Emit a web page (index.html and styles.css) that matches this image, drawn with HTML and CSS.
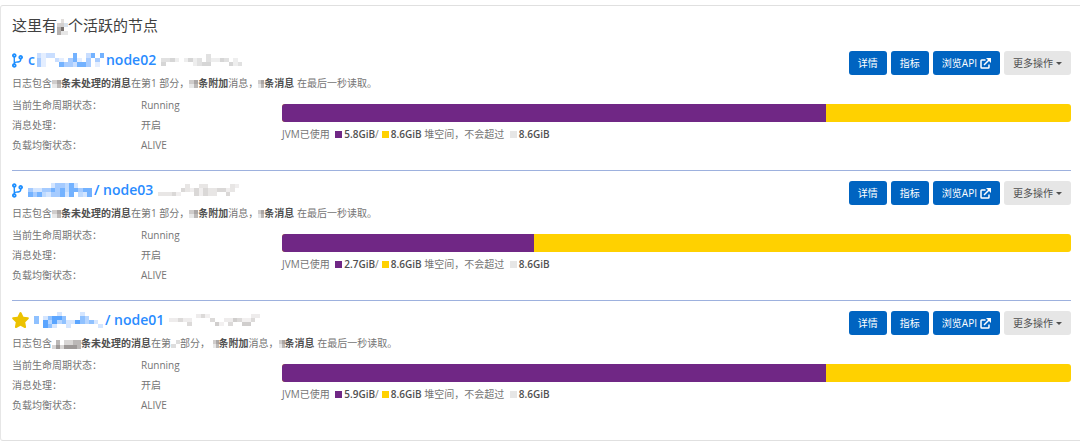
FILE: index.html
```html
<!DOCTYPE html>
<html lang="zh-CN">
<head>
<meta charset="utf-8">
<meta name="viewport" content="width=device-width, initial-scale=1">
<title>节点</title>
<link rel="stylesheet" href="styles.css">
</head>
<body>
<svg class="sprite" aria-hidden="true">
  <symbol id="branch" viewBox="0 0 384 512"><path d="M384 144c0-44.2-35.8-80-80-80s-80 35.8-80 80c0 36.4 24.3 67.1 57.5 76.8-.6 16.1-4.2 28.5-11 36.9-15.4 19.2-49.3 22.4-85.2 25.7-28.2 2.6-57.4 5.4-81.3 16.9v-144c32.5-10.2 56-40.5 56-76.3 0-44.2-35.8-80-80-80S0 35.8 0 80c0 35.8 23.5 66.1 56 76.3v199.3C23.5 365.9 0 396.2 0 432c0 44.2 35.8 80 80 80s80-35.8 80-80c0-34-21.2-63.1-51.2-74.6 3.1-5.2 7.8-9.8 14.9-13.4 16.2-8.2 40.4-10.4 66.1-12.8 42.2-3.9 90-8.4 118.2-43.4 14-17.4 21.1-39.8 21.6-67.9 31.6-10.8 54.4-40.7 54.4-75.9zM80 64c8.800 0 16 7.200 16 16s-7.200 16-16 16-16-7.200-16-16 7.200-16 16-16zm0 384c-8.800 0-16-7.200-16-16s7.200-16 16-16 16 7.200 16 16-7.200 16-16 16zm224-320c8.800 0 16 7.200 16 16s-7.200 16-16 16-16-7.200-16-16 7.200-16 16-16z"/></symbol>
  <symbol id="star" viewBox="20 0 536 512"><path d="M259.300 17.800L194 150.200 47.900 171.500c-26.200 3.800-36.700 36.100-17.700 54.600l105.700 103-25 145.500c-4.500 26.300 23.200 46 46.400 33.700L288 439.600l130.700 68.700c23.200 12.200 50.900-7.400 46.400-33.700l-25-145.500 105.700-103c19-18.500 8.500-50.800-17.700-54.600L382 150.200 316.700 17.800c-11.700-23.600-45.600-23.900-57.400 0z"/></symbol>
  <symbol id="external" viewBox="0 0 22 22"><path d="M11 4H3.500Q2 4 2 5.500V18.500Q2 20 3.500 20H16.500Q18 20 18 18.500V13M8 14L18 4" fill="none" stroke="currentColor" stroke-width="3"/><path d="M12 0h10v10z" fill="currentColor"/></symbol>
  <symbol id="dots" viewBox="0 0 2 2" preserveAspectRatio="none"><path fill="#cfcccb" d="M0 0h1v1H0z"/><path fill="#e8e8e8" d="M0 1h1v1H0z"/><path fill="#aaa6a5" d="M1 0h1v1H1z"/><path fill="#bbb8b7" d="M1 1h1v1H1z"/></symbol>
</svg>

<main class="card">
  <h1 class="heading">这里有<svg class="mask mask-heading" viewBox="0 0 3 4" preserveAspectRatio="none" aria-hidden="true"><path fill="#e2dfdd" d="M1 0h1v1H1z"/><path fill="#d3d0cf" d="M0 1h2v1H0z"/><path fill="#d9e2ec" d="M2 1h1v1H2z"/><path fill="#b4b0ae" d="M0 2h1v2H0z"/><path fill="#77716f" d="M1 2h1v1H1z"/><path fill="#e6e6e6" d="M1 3h2v1H1z"/></svg>个活跃的节点</h1>

  <section class="node">
    <header class="node-head">
      <div>
        <h2 class="title">
          <svg class="branch" aria-hidden="true"><use href="#branch"/></svg>
          <a class="name" href="#node02">c<svg class="mask mask-name" viewBox="0 0 15 3" preserveAspectRatio="none" aria-hidden="true"><path fill="#c9deff" d="M0 0h1v1H0zM2 0h2v1H2zM11 0h1v1h-1zM4 1h1v1H4zM8 2h1v1H8z"/><path fill="#e4eeff" d="M1 0h1v3H1zM5 1h1v1H5zM9 1h1v1H9zM13 2h1v1h-1z"/><path fill="#a8ccff" d="M0 1h1v2H0zM6 2h1v1H6zM7 1h1v2H7zM11 1h1v2h-1zM13 1h1v1h-1z"/><path fill="#73b2ff" d="M5 2h1v1H5zM8 0h1v2H8zM9 2h2v1H9zM12 0h1v1h-1zM14 0h1v1h-1z"/></svg>node02</a>
          <svg class="mask mask-host" viewBox="0 0 18 3" preserveAspectRatio="none" aria-hidden="true"><path fill="#e1e1e1" d="M0 1h2v1H0zM8 1h1v2H8zM10 0h1v2h-1zM14 1h1v1h-1zM17 2h1v1h-1z"/><path fill="#d6d6d6" d="M0 2h1v1H0zM2 1h1v1H2zM6 1h1v1H6zM9 2h2v1H9zM13 1h1v1h-1zM15 2h1v1h-1z"/><path fill="#eee" d="M3 1h1v1H3zM5 1h1v1H5zM7 1h1v2H7zM11 1h2v1h-2zM16 1h1v2h-1z"/></svg>
        </h2>
        <p class="message">日志包含<svg class="mask dots" aria-hidden="true"><use href="#dots"/></svg><b>条未处理的消息</b>在第1 部分，<svg class="mask dots" aria-hidden="true"><use href="#dots"/></svg><b>条附加</b>消息，<svg class="mask dots-small" aria-hidden="true"><use href="#dots"/></svg><b>条消息</b> 在最后一秒读取。</p>
      </div>
      <div class="actions">
        <button class="btn" type="button">详情</button>
        <button class="btn" type="button">指标</button>
        <a class="btn" href="#api02">浏览API <svg class="external" aria-hidden="true"><use href="#external"/></svg></a>
        <button class="btn btn-more" type="button">更多操作<span class="caret"></span></button>
      </div>
    </header>
    <div class="details">
      <dl class="status">
        <dt>当前生命周期状态：</dt><dd>Running</dd>
        <dt>消息处理：</dt><dd>开启</dd>
        <dt>负载均衡状态：</dt><dd>ALIVE</dd>
      </dl>
      <div class="memory">
        <div class="bar"><div class="used" style="width:69%"></div></div>
        <p class="legend">JVM已使用 <i class="key key-used"></i><b>5.8GiB</b>/<i class="key key-heap"></i><b>8.6GiB</b> 堆空间，不会超过 <i class="key key-max"></i><b>8.6GiB</b></p>
      </div>
    </div>
  </section>

  <section class="node">
    <header class="node-head">
      <div>
        <h2 class="title">
          <svg class="branch" aria-hidden="true"><use href="#branch"/></svg>
          <a class="name" href="#node03"><svg class="mask mask-name-short" viewBox="0 0 14 3" preserveAspectRatio="none" aria-hidden="true"><path fill="#d3e5ff" d="M1 1h2v1H1zM5 0h1v1H5zM10 0h1v1h-1zM4 2h1v1H4zM8 2h1v1H8zM12 2h1v1h-1z"/><path fill="#a5cbff" d="M0 1h1v1H0zM3 1h2v1H3zM6 0h2v1H6zM6 1h1v1H6zM11 1h1v1h-1zM1 2h1v1H1zM5 2h2v1H5z"/><path fill="#73b2ff" d="M0 2h1v1H0zM2 2h1v1H2zM5 1h1v1H5zM7 1h1v1H7zM9 0h1v3H9zM10 1h1v1h-1zM12 1h2v1h-2zM13 2h1v1h-1zM7 2h1v1H7z"/><path fill="#bedaff" d="M3 2h1v1H3zM8 0h1v2H8zM11 2h1v1h-1z"/></svg>/ node03</a>
          <svg class="mask mask-host" viewBox="0 0 18 3" preserveAspectRatio="none" aria-hidden="true"><path fill="#e8e6e5" d="M0 2h3v1H0zM6 0h1v2H6zM9 0h2v1H9zM11 1h2v2h-2zM16 0h1v2h-1z"/><path fill="#dad8d7" d="M3 2h1v1H3zM5 1h1v1H5zM8 1h1v2H8zM10 1h1v2h-1zM13 1h2v1h-2zM15 2h1v1h-1z"/><path fill="#f0eeee" d="M4 2h1v1H4zM7 1h1v1H7zM9 1h1v2H9zM15 1h1v1h-1zM17 0h1v1h-1z"/></svg>
        </h2>
        <p class="message">日志包含<svg class="mask dots" aria-hidden="true"><use href="#dots"/></svg><b>条未处理的消息</b>在第1 部分，<svg class="mask dots" aria-hidden="true"><use href="#dots"/></svg><b>条附加</b>消息，<svg class="mask dots-small" aria-hidden="true"><use href="#dots"/></svg><b>条消息</b> 在最后一秒读取。</p>
      </div>
      <div class="actions">
        <button class="btn" type="button">详情</button>
        <button class="btn" type="button">指标</button>
        <a class="btn" href="#api03">浏览API <svg class="external" aria-hidden="true"><use href="#external"/></svg></a>
        <button class="btn btn-more" type="button">更多操作<span class="caret"></span></button>
      </div>
    </header>
    <div class="details">
      <dl class="status">
        <dt>当前生命周期状态：</dt><dd>Running</dd>
        <dt>消息处理：</dt><dd>开启</dd>
        <dt>负载均衡状态：</dt><dd>ALIVE</dd>
      </dl>
      <div class="memory">
        <div class="bar"><div class="used" style="width:32%"></div></div>
        <p class="legend">JVM已使用 <i class="key key-used"></i><b>2.7GiB</b>/<i class="key key-heap"></i><b>8.6GiB</b> 堆空间，不会超过 <i class="key key-max"></i><b>8.6GiB</b></p>
      </div>
    </div>
  </section>

  <section class="node">
    <header class="node-head">
      <div>
        <h2 class="title">
          <svg class="star" aria-hidden="true"><use href="#star"/></svg>
          <a class="name" href="#node01"><svg class="mask mask-name-tall" viewBox="0 0 15 4" preserveAspectRatio="none" aria-hidden="true"><path fill="#8fc1ff" d="M0 1h1v2H0zM3 1h1v1H3zM6 1h1v2H6zM3 3h1v1H3zM10 1h1v2h-1zM12 2h1v1h-1z"/><path fill="#d5e6ff" d="M2 1h1v1H2zM5 0h1v1H5zM7 2h1v2H7zM8 2h1v1H8zM10 0h1v1h-1zM13 2h1v1h-1zM14 3h1v1h-1zM4 3h1v1H4z"/><path fill="#5aa5ff" d="M2 2h1v2H2zM4 1h2v1H4zM4 2h1v1H4zM9 2h1v1H9z"/><path fill="#b5d5ff" d="M3 2h1v1H3zM5 2h1v1H5zM11 1h1v2h-1z"/></svg>/ node01</a>
          <svg class="mask mask-host-wide" viewBox="0 0 20 3" preserveAspectRatio="none" aria-hidden="true"><path fill="#eeecec" d="M0 1h2v1H0zM3 1h2v1H3zM6 0h1v1H6zM12 1h2v1h-2zM18 0h2v1h-2z"/><path fill="#dcdad9" d="M2 1h1v1H2zM4 2h1v1H4zM7 0h1v1H7zM9 1h1v1H9zM13 2h1v1h-1zM15 1h1v1h-1zM18 1h1v1h-1z"/><path fill="#d0cecd" d="M10 2h1v1h-1zM14 1h1v1h-1zM16 2h2v1h-2z"/><path fill="#f2f0f0" d="M8 0h1v1H8zM11 2h1v1h-1zM16 1h2v1h-2z"/></svg>
        </h2>
        <p class="message">日志包含<svg class="mask dots-wide" viewBox="0 0 7 2" preserveAspectRatio="none" aria-hidden="true"><path fill="#d8d6d5" d="M0 1h1v1H0zM2 1h1v1H2zM3 0h2v1H3z"/><path fill="#bbb8b7" d="M1 0h1v1H1zM5 0h2v1H5zM6 1h1v1H6z"/><path fill="#9d9998" d="M1 1h1v1H1zM3 1h3v1H3z"/></svg><b>条未处理的消息</b>在第<svg class="mask dots" viewBox="0 0 2 2" preserveAspectRatio="none" aria-hidden="true"><path fill="#ddd" d="M0 1h1v1H0zM1 0h1v1H1z"/></svg>部分， <svg class="mask dots-small" aria-hidden="true"><use href="#dots"/></svg><b>条附加</b>消息，<svg class="mask dots-small" aria-hidden="true"><use href="#dots"/></svg><b>条消息</b> 在最后一秒读取。</p>
      </div>
      <div class="actions">
        <button class="btn" type="button">详情</button>
        <button class="btn" type="button">指标</button>
        <a class="btn" href="#api01">浏览API <svg class="external" aria-hidden="true"><use href="#external"/></svg></a>
        <button class="btn btn-more" type="button">更多操作<span class="caret"></span></button>
      </div>
    </header>
    <div class="details">
      <dl class="status">
        <dt>当前生命周期状态：</dt><dd>Running</dd>
        <dt>消息处理：</dt><dd>开启</dd>
        <dt>负载均衡状态：</dt><dd>ALIVE</dd>
      </dl>
      <div class="memory">
        <div class="bar"><div class="used" style="width:69%"></div></div>
        <p class="legend">JVM已使用 <i class="key key-used"></i><b>5.9GiB</b>/<i class="key key-heap"></i><b>8.6GiB</b> 堆空间，不会超过 <i class="key key-max"></i><b>8.6GiB</b></p>
      </div>
    </div>
  </section>
</main>
</body>
</html>
```
FILE: styles.css
```css
* { box-sizing: border-box; }

body {
  margin: 0;
  padding-top: 5px;
  background: #fff;
  color: #757575;
  font-family: "Open Sans", "Noto Sans CJK SC", sans-serif;
  font-size: 10px;
  line-height: 20px;
}

h1, h2, p, dl, dd { margin: 0; }

.sprite { display: none; }

.card {
  border: 1px solid #e0e0e0;
  border-right: 0;
  border-left-color: #e6e6e6;
  border-radius: 3px 0 0 3px;
  padding: 4px 9px 10px 11px;
}

.heading {
  color: #404040;
  font-size: 15px;
  font-weight: 400;
  line-height: 30px;
}

.node {
  border-top: 1px solid #9db1de;
  padding: 9px 0 15px;
}

.heading + .node { border-top-color: transparent; }

.node-head {
  display: flex;
  justify-content: space-between;
  align-items: flex-start;
}

.title {
  display: flex;
  align-items: center;
  gap: 5px;
  margin-bottom: 3px;
  font-size: 14px;
  font-weight: 600;
  line-height: 20px;
}

.name {
  display: flex;
  align-items: center;
  gap: 2px;
  color: #2a8cff;
  text-decoration: none;
}

.branch { width: 11px; height: 15px; fill: #1e8fff; }
.star { width: 17px; height: 16px; fill: #ecc200; }

.mask { shape-rendering: crispEdges; vertical-align: middle; }
.mask-heading { width: 11px; height: 16px; }
.mask-name { width: 67px; height: 14px; }
.mask-name-short { width: 64px; height: 14px; }
.mask-name-tall { width: 69px; height: 16px; }
.mask-host { width: 81px; height: 12px; }
.mask-host-wide { width: 91px; height: 12px; }
.dots { width: 9px; height: 8px; }
.dots-small { width: 6px; height: 8px; }
.dots-wide { width: 29px; height: 9px; }

.message { margin-bottom: 2px; }

b { color: #505050; font-weight: 600; }

.actions {
  display: flex;
  gap: 4px;
  padding-top: 1px;
}

.btn {
  display: flex;
  align-items: center;
  gap: 3px;
  height: 24px;
  padding: 0 9px;
  border: 0;
  border-radius: 3px;
  background: #0064c1;
  color: #fff;
  font: inherit;
  text-decoration: none;
  white-space: nowrap;
}

.btn-more { background: #e6e6e6; color: #505050; }
.external { width: 11px; height: 11px; }

.caret {
  border: 3px solid transparent;
  border-top-color: #505050;
  border-bottom: 0;
}

.details { display: flex; }

.status {
  display: grid;
  grid-template-columns: 129px 141px;
  flex: none;
}

.memory { flex: 1; padding-top: 9px; }

.bar {
  height: 18px;
  margin-bottom: 2px;
  border-radius: 3px;
  overflow: hidden;
  background: #ffd100;
}

.used { height: 100%; background: #702785; }

.key {
  display: inline-block;
  width: 7px;
  height: 7px;
  margin: 0 2px 0 3px;
}

.key-used { background: #702785; }
.key-heap { background: #ffd100; }
.key-max { background: #e6e6e6; }
```
